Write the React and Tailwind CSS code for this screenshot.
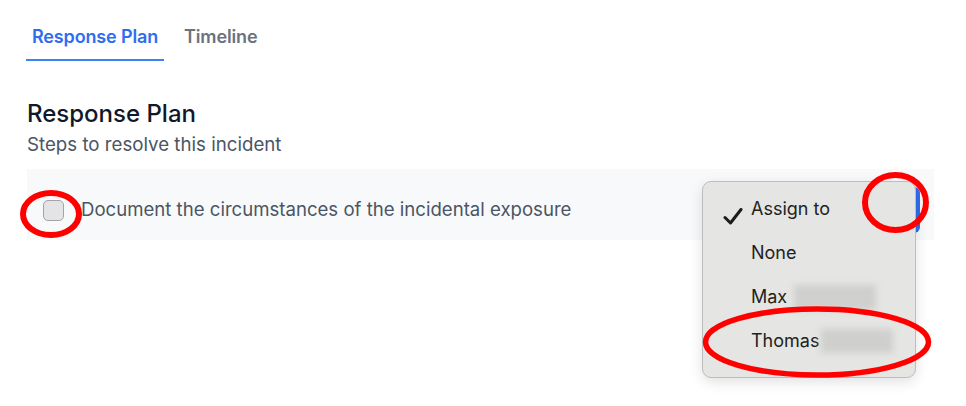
import React from "react";

export default function App() {
  return (
    <div className="relative w-[966px] h-[406px] overflow-hidden bg-white font-['Inter',sans-serif]">
      {/* Tabs */}
      <div className="flex pl-[26px] pt-[25px] gap-[12px]">
        <button className="px-[6px] pb-[10px] border-b-[2px] border-[#3b82f6] text-[18px] leading-[24px] font-semibold text-[#2f6df0] tracking-[-0.15px]">
          Response Plan
        </button>
        <button className="px-[8px] pb-[10px] border-b-[2px] border-transparent text-[18px] leading-[24px] font-semibold text-[#6b7280] tracking-[-0.15px]">
          Timeline
        </button>
      </div>

      {/* Section header */}
      <div className="pl-[27px] pt-[39px]">
        <h2 className="text-[24px] leading-[28px] font-medium text-[#111827]">Response Plan</h2>
        <p className="mt-[5px] text-[18.7px] leading-[24px] text-[#4b5563]">Steps to resolve this incident</p>
      </div>

      {/* Step row */}
      <div className="ml-[27px] mr-[32px] mt-[12px] h-[71px] bg-[#f8f9fb] flex items-start pt-[31px] pl-[16px] pr-[14px]">
        <div className="w-[21px] h-[21px] rounded-[5px] bg-[#e4e4e6] border border-[#a3a3a8]" />
        <span className="ml-[17px] text-[18.6px] leading-[24px] text-[#4b5563] -mt-[3px]">
          Document the circumstances of the incidental exposure
        </span>
        <div className="ml-auto -mt-[13px] w-[120px] h-[46px] rounded-[6px] bg-[#2f6df0]" />
      </div>

      {/* Dropdown menu (native popup) */}
      <div className="absolute left-[702px] top-[181px] w-[214px] h-[197px] rounded-[9px] bg-[#e5e5e3] border border-[#bdbdbd] shadow-[0_4px_14px_rgba(0,0,0,0.12)] pt-[5px] font-['Inter',sans-serif] text-[18px] text-[#222222]">
        <div className="relative h-[44px] flex items-center pl-[48px]">
          <svg className="absolute left-[20px] top-[21px]" width="20" height="17" viewBox="0 0 20 17">
            <path d="M2 9.5 L7.5 15 L18 1.5" fill="none" stroke="#1c1c1c" strokeWidth="3" strokeLinecap="round" strokeLinejoin="round" />
          </svg>
          <span className="-mt-[2px]">Assign to</span>
        </div>
        <div className="h-[44px] flex items-center pl-[48px]">
          <span className="-mt-[2px]">None</span>
        </div>
        <div className="h-[44px] flex items-center pl-[48px]">
          <span className="-mt-[2px]">Max</span>
          <span className="ml-[7px] w-[82px] h-[25px] bg-[#cfcfcd] blur-[3px]" />
        </div>
        <div className="h-[44px] flex items-center pl-[48px]">
          <span className="-mt-[2px]">Thomas</span>
          <span className="ml-[2px] w-[72px] h-[24px] bg-[#cfcfcd] blur-[3px]" />
        </div>
      </div>

      {/* Red annotation marks */}
      <svg className="absolute left-0 top-0 pointer-events-none" width="966" height="406" viewBox="0 0 966 406">
        <ellipse cx="51" cy="214" rx="28" ry="21" fill="none" stroke="#ff0000" strokeWidth="6" />
        <ellipse cx="895.5" cy="202.5" rx="30.5" ry="27.5" fill="none" stroke="#ff0000" strokeWidth="6" />
        <ellipse cx="817" cy="342" rx="111.5" ry="33" fill="none" stroke="#ff0000" strokeWidth="5.5" />
      </svg>
    </div>
  );
}
